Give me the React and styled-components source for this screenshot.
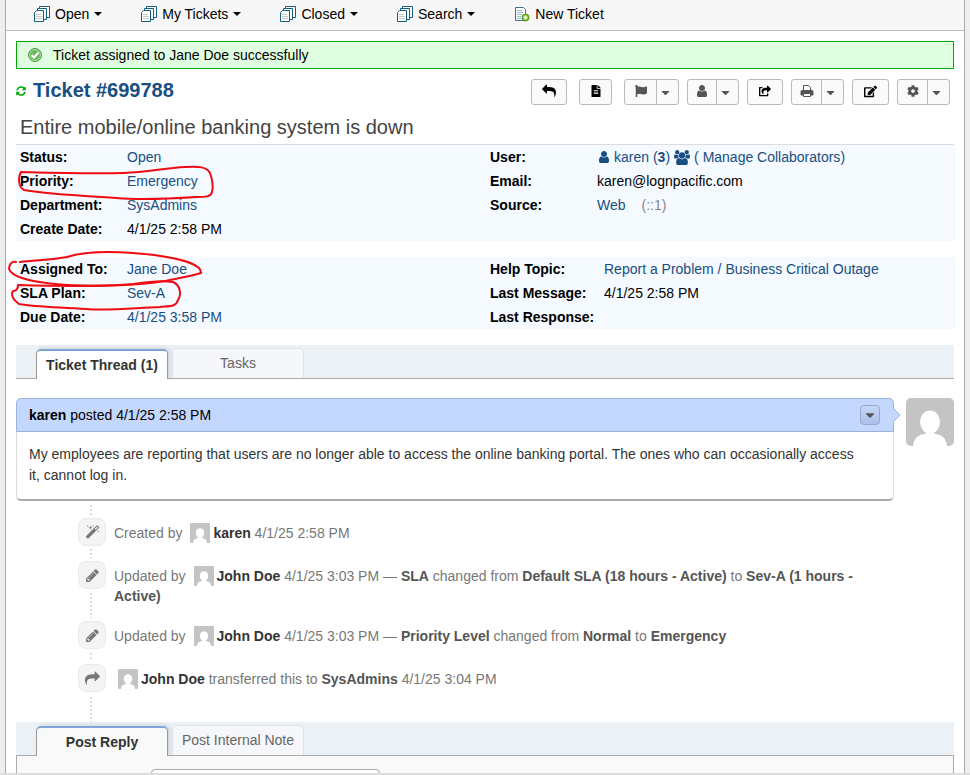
import React from "react";
import styled, { createGlobalStyle, css } from "styled-components";
import {
  FaFileAlt, FaFlag, FaShareSquare, FaEdit, FaCog, FaCaretDown, FaSyncAlt,
} from "react-icons/fa";

const GlobalStyle = createGlobalStyle`
  * { box-sizing: border-box; }
  body {
    margin: 0;
    background: #eee;
    color: #000;
    font: 14px/20px "Liberation Sans", Arial, sans-serif;
  }
  button, input, select { font: inherit; }
  a { color: #184e81; text-decoration: none; }
`;

const Page = styled.div`
  height: 100vh;
  padding: 0 5px;
  overflow: hidden;
  border-bottom: 2px solid #ddd;
`;

const Container = styled.main`
  display: flex;
  flex-direction: column;
  height: 100%;
  background: #fff;
  border: solid #aaa;
  border-width: 0 1px;
  overflow: hidden;
`;

const Nav = styled.nav`
  display: flex;
  flex: none;
  align-items: center;
  height: 31px;
  padding: 0 28px 2px;
  gap: 39px;
  background: #f7f7f7;
  border-bottom: 1px solid #bebebe;
`;

const NavLink = styled.a`
  display: flex;
  align-items: center;
  gap: 5px;
  color: #000;
`;

const Caret = styled.span`
  border: solid transparent;
  border-width: 4px 4px 0;
  border-top-color: currentColor;
`;

const Content = styled.div`
  display: flex;
  flex-direction: column;
  flex: none;
  padding: 10px 10px 0;
`;

const Notice = styled.div`
  display: flex;
  align-items: center;
  gap: 10px;
  height: 28px;
  padding: 0 10px;
  background: #e0ffe0;
  border: 1px solid #0a0;
`;

const TitleRow = styled.header`
  display: flex;
  justify-content: space-between;
  align-items: flex-start;
  padding: 10px 4px 0 0;
`;

const Title = styled.h1`
  display: flex;
  align-items: center;
  gap: 7px;
  margin: 0;
  font-size: 20px;
  line-height: 23px;
  color: #184e81;

  svg { color: #0a0; }
`;

const Actions = styled.div`
  display: flex;
  gap: 8px;
`;

const ActionGroup = styled.div`
  display: flex;
  height: 26px;
  background: #fafafa;
  border: 1px solid #bbb;
  border-radius: 3px;
  margin-right: ${(p) => (p.$spaced ? "4px" : "0")};
`;

const ActionButton = styled.button`
  display: flex;
  align-items: center;
  justify-content: center;
  width: ${(p) => p.$width || 34}px;
  padding: 0 0 2px;
  border: 0;
  background: none;
  color: ${(p) => (p.$muted ? "#555" : "#000")};

  & + & {
    padding: 0 4px 0 0;
    border-left: 1px solid #bbb;
  }
`;

const Subject = styled.h2`
  margin: 11px 0 0;
  padding: 0 4px 5px;
  font-size: 20px;
  font-weight: 400;
  line-height: 23px;
  color: #444;
  border-bottom: 1px solid #ddd;
`;

const Details = styled.div`
  position: relative;
  display: grid;
  gap: 16px;
  margin-right: -2px;
`;

const DetailSection = styled.section`
  display: grid;
  grid-template-columns: 1fr 1fr;
  align-items: start;
  background: #f4faff;
`;

const DetailTable = styled.table`
  border-collapse: collapse;

  th, td {
    height: 24px;
    padding: 0;
    text-align: left;
    line-height: 24px;
  }
  th {
    width: ${(p) => p.$label || 111}px;
    padding-left: 4px;
  }
`;

const UserLine = styled.span`
  display: flex;
  align-items: center;
  gap: 4px;
  color: #184e81;
`;

const Address = styled.span`
  margin-left: 16px;
  color: #888;
`;

const Markup = styled.svg`
  position: absolute;
  top: 0;
  left: -16px;
  pointer-events: none;
`;

const TabBar = styled.div`
  display: flex;
  align-items: flex-end;
  gap: 4px;
  height: 34px;
  margin-top: ${(p) => (p.$first ? "16px" : "0")};
  padding-left: 20px;
  background: #ecf1f5;
  border-bottom: 1px solid #aaa;
`;

const Tab = styled.button`
  width: 132px;
  height: 30px;
  padding: 0 0 2px;
  border: 1px solid #e0e2e8;
  border-bottom: 0;
  border-radius: 5px 5px 0 0;
  background: #f6f7fb;
  color: #666;

  ${(p) => p.$active && css`
    margin-bottom: -1px;
    padding-top: 2px;
    font-weight: 700;
    color: #333;
    background: ${p.$surface || "#fff"};
    border-color: #999;
    border-top: 2px solid #7fa5d8;
    box-shadow: 2px -1px 4px rgba(0, 0, 0, 0.12);
    clip-path: inset(-6px -6px 0 -6px);
  `}
`;

const Thread = styled.div`
  display: grid;
  grid-template-columns: 1fr 48px;
  gap: 12px;
  align-items: start;
  margin-top: 19px;
`;

const Entry = styled.article`
  border: 1px solid #ddd;
  border-bottom: 2px solid #aaa;
  border-radius: 5px;
`;

const EntryHeader = styled.header`
  position: relative;
  display: flex;
  align-items: center;
  justify-content: space-between;
  height: 34px;
  margin: -1px -1px 0;
  padding: 0 13px 0 12px;
  background: #c4d8ff;
  border: 1px solid #9eb3d8;
  border-radius: 5px 5px 0 0;
`;

const Pointer = styled.svg`
  position: absolute;
  top: 8px;
  right: -8px;
`;

const MenuButton = styled.button`
  display: flex;
  align-items: center;
  justify-content: center;
  width: 20px;
  height: 20px;
  padding: 0;
  border: 1px solid #98a9cc;
  border-radius: 4px;
  background: linear-gradient(#c6d6f6, #abc0e8);
  color: #555;
`;

const EntryBody = styled.p`
  margin: 0;
  padding: 12px 32px 13px 12px;
  line-height: 21px;
  color: #333;
`;

const Portrait = styled.svg`
  display: block;
  border-radius: ${(p) => (p.width > 30 ? 5 : 1)}px;
`;

const Events = styled.ol`
  display: grid;
  gap: 15px;
  margin: 0 0 0 62px;
  padding: 17px 0 30px;
  list-style: none;
  background: repeating-linear-gradient(#ddd 0 2px, transparent 2px 4px) 12px 4px / 2px 100% no-repeat;
`;

const Event = styled.li`
  display: grid;
  grid-template-columns: 28px 1fr;
  gap: 8px;
  padding-right: 76px;
  color: #777;

  strong { color: #555; }
`;

const EventIcon = styled.span`
  display: flex;
  align-items: center;
  justify-content: center;
  width: 28px;
  height: 28px;
  border: 1px solid #eaeaea;
  border-radius: 8px;
  background: #f4f4f4;
  box-shadow: 0 0 0 3px #fff;
`;

const EventText = styled.div`
  padding-top: 5px;
`;

const Person = styled.strong`
  && { color: #333; }

  svg {
    display: inline-block;
    margin: 0 3px -5px 4px;
    vertical-align: baseline;
    height: 20px;
  }
`;

const Composer = styled.form`
  min-height: 60px;
  padding: 13px 0 0 134px;
  background: #f9f9f9;
  border: solid #aaa;
  border-width: 0 1px;
`;

const Field = styled.select`
  width: 229px;
  height: 28px;
  border: 1px solid #aaa;
  border-radius: 4px;
  background: #fff;
`;

const glyphs = {
  share: "M1792 640q0 26-19 45l-512 512q-19 19-45 19t-45-19-19-45v-256h-224q-98 0-175.5 6t-154 21.5-133 42.5-105.5 69.5-80 101-48.5 138.5-17.5 181q0 55 5 123 0 6 2.5 23.5t2.5 26.5q0 15-8.5 25t-23.5 10q-16 0-28-17-7-9-13-22t-13.5-30-10.5-24q-127-285-127-451 0-199 53-333 162-403 875-403h224v-256q0-26 19-45t45-19 45 19l512 512q19 19 19 45z",
  pencil: "M491 1536l91-91-235-235-91 91v107h128v128h107zm523-928q0-22-22-22-10 0-17 7l-542 542q-7 7-7 17 0 22 22 22 10 0 17-7l542-542q7-7 7-17zm-54-192l416 416-832 832h-416v-416zm683 96q0 53-37 90l-166 166-416-416 166-165q36-38 90-38 53 0 91 38l235 234q37 39 37 91z",
  user: "M1536 1399q0 109-62.5 187t-150.5 78h-854q-88 0-150.5-78t-62.5-187q0-85 8.5-160.5t31.5-152 58.5-131 94-89 134.5-34.5q131 128 313 128t313-128q76 0 134.5 34.5t94 89 58.5 131 31.5 152 8.5 160.5zm-256-887q0 159-112.5 271.5t-271.5 112.5-271.5-112.5-112.5-271.5 112.5-271.5 271.5-112.5 271.5 112.5 112.5 271.5z",
  users: "M593 896q-162 5-265 128h-134q-82 0-138-40.5t-56-118.5q0-353 124-353 6 0 43.5 21t97.5 42.5 119 21.5q67 0 133-23-5 37-5 66 0 139 81 256zm1071 637q0 120-73 189.5t-194 69.5h-874q-121 0-194-69.5t-73-189.5q0-53 3.5-103.5t14-109 26.5-108.5 43-97.5 62-81 85.5-53.5 111.5-20q10 0 43 21.5t73 48 107 48 135 21.5 135-21.5 107-48 73-48 43-21.5q61 0 111.5 20t85.5 53.5 62 81 43 97.5 26.5 108.5 14 109 3.5 103.5zm-1024-1277q0 106-75 181t-181 75-181-75-75-181 75-181 181-75 181 75 75 181zm704 384q0 159-112.5 271.5t-271.5 112.5-271.5-112.5-112.5-271.5 112.5-271.5 271.5-112.5 271.5 112.5 112.5 271.5zm576 225q0 78-56 118.5t-138 40.5h-134q-103-123-265-128 81-117 81-256 0-29-5-66 66 23 133 23 59 0 119-21.5t97.5-42.5 43.5-21q124 0 124 353zm-128-609q0 106-75 181t-181 75-181-75-75-181 75-181 181-75 181 75 75 181z",
  wand: "M1254 581l293-293-107-107-293 293zm447-293q0 27-18 45l-1286 1286q-18 18-45 18t-45-18l-198-198q-18-18-18-45t18-45l1286-1286q18-18 45-18t45 18l198 198q18 18 18 45zm-1351-190l98 30-98 30-30 98-30-98-98-30 98-30 30-98zm350 162l196 60-196 60-60 196-60-196-196-60 196-60 60-196zm930 478l98 30-98 30-30 98-30-98-98-30 98-30 30-98zm-640-640l98 30-98 30-30 98-30-98-98-30 98-30 30-98z",
};

const Glyph = ({ name, size = 15, width = 1792, mirrored }) => (
  <svg
    width={Math.round((size * width) / 1792)}
    height={size}
    viewBox={`0 0 ${width} 1792`}
    fill="currentColor"
    aria-hidden="true"
  >
    <path d={glyphs[name]} transform={mirrored ? "matrix(-1 0 0 1 1792 0)" : undefined} />
  </svg>
);

const QueueIcon = () => (
  <svg width="16" height="16" viewBox="0 0 16 16" fill="#fff" stroke="#16607f" aria-hidden="true">
    <path d="M5.5 2.5V.5h10v11h-3" />
    <path d="M3.5 4V2.5h9v11h-3" />
    <path d="M.5 6.5l2-2h7v11h-9z" />
    <path d="M2 8.5h5M2 10.5h6M2 12.5h6" stroke="#c8c8c8" />
  </svg>
);

const NewIcon = () => (
  <svg width="16" height="16" viewBox="0 0 16 16" aria-hidden="true">
    <path d="M1.5 1.5h8l2 2v11h-10z" fill="#fff" stroke="#4c6b91" />
    <path d="M3 4.5h5M3 6.5h6M3 8.5h5M3 10.5h4M3 12.5h4" stroke="#8fb8dc" />
    <circle cx="11.5" cy="11.5" r="3.5" fill="#7bc322" stroke="#4b9415" />
    <path d="M11.5 9.5v4M9.5 11.5h4" stroke="#fff" strokeWidth="1.5" />
  </svg>
);

const SuccessIcon = () => (
  <svg width="16" height="16" viewBox="0 0 16 16" aria-hidden="true">
    <circle cx="8" cy="8" r="6.5" fill="#6bb85f" stroke="#4c9147" />
    <circle cx="8" cy="8" r="5.5" fill="none" stroke="#b5dfaa" />
    <path d="M4.5 8l2.5 2.5 4.5-5" fill="none" stroke="#fff" strokeWidth="2" />
  </svg>
);

const PrintIcon = () => (
  <svg width="14" height="14" viewBox="0 0 14 14" fill="none" stroke="currentColor" aria-hidden="true">
    <path d="M3.5 6.5v-5h5l2 2v3M3.5 9.5v3h7v-3z" />
    <path d="M1 11V7.5q0-1 1-1h10q1 0 1 1V11h-2.5V9.5h-7V11z" fill="currentColor" />
  </svg>
);

const Avatar = ({ size }) => (
  <Portrait width={size} height={size} viewBox="0 0 48 48" aria-hidden="true">
    <path d="M0 0h48v48H0z" fill="#c4c4c4" />
    <ellipse cx="24" cy="24" rx="10" ry="11.5" fill="#fff" />
    <path d="M7 48c1-8 5-11.5 12-12l2-3h6l2 3c7 .5 11 4 12 12z" fill="#fff" />
  </Portrait>
);

const navItems = ["Open", "My Tickets", "Closed", "Search"];

const actions = [
  { label: "Reply", icon: <Glyph name="share" size={14} mirrored />, spaced: true },
  { label: "Note", icon: <FaFileAlt size={12} />, width: 31, spaced: true },
  { label: "Flag", icon: <FaFlag size={12} />, width: 31, menu: 22 },
  { label: "Assign", icon: <Glyph name="user" size={14} />, width: 28, menu: 22 },
  { label: "Transfer", icon: <FaShareSquare size={12} /> },
  { label: "Print", icon: <PrintIcon />, width: 29, menu: 22 },
  { label: "Edit", icon: <FaEdit size={13} />, width: 35 },
  { label: "Settings", icon: <FaCog size={12} />, width: 29, menu: 22 },
];

const Rows = ({ label, rows }) => (
  <DetailTable $label={label}>
    <tbody>
      {rows.map(([name, value]) => (
        <tr key={name}><th scope="row">{name}:</th><td>{value}</td></tr>
      ))}
    </tbody>
  </DetailTable>
);

const link = (text) => <a href="#edit">{text}</a>;

const By = ({ name }) => <Person><Avatar size={20} />{name}</Person>;

const TicketEvent = ({ icon, children }) => (
  <Event><EventIcon>{icon}</EventIcon><EventText>{children}</EventText></Event>
);

export default function App() {
  return (
    <Page>
      <GlobalStyle />
      <Container>
        <Nav>
          {navItems.map((item) => (
            <NavLink href="#queue" key={item}><QueueIcon />{item}<Caret /></NavLink>
          ))}
          <NavLink href="#new"><NewIcon />New Ticket</NavLink>
        </Nav>
        <Content>
          <Notice role="status"><SuccessIcon />Ticket assigned to Jane Doe successfully</Notice>
          <TitleRow>
            <Title><FaSyncAlt size={10} />Ticket #699788</Title>
            <Actions>
              {actions.map((a) => (
                <ActionGroup key={a.label} $spaced={a.spaced}>
                  <ActionButton type="button" aria-label={a.label} $width={a.width} $muted={a.menu}>{a.icon}</ActionButton>
                  {a.menu && (
                    <ActionButton type="button" aria-label={`${a.label} options`} $width={a.menu} $muted>
                      <FaCaretDown size={13} />
                    </ActionButton>
                  )}
                </ActionGroup>
              ))}
            </Actions>
          </TitleRow>
          <Subject>Entire mobile/online banking system is down</Subject>
          <Details>
            <DetailSection>
              <Rows rows={[
                ["Status", link("Open")],
                ["Priority", link("Emergency")],
                ["Department", link("SysAdmins")],
                ["Create Date", "4/1/25 2:58 PM"],
              ]} />
              <Rows rows={[
                ["User", (
                  <UserLine>
                    <Glyph name="user" size={14} width={1664} />
                    <span>{link("karen")} (<b>3</b>)</span>
                    <Glyph name="users" size={15} width={1920} />
                    <span>( {link("Manage Collaborators")})</span>
                  </UserLine>
                )],
                ["Email", "karen@lognpacific.com"],
                ["Source", <>{link("Web")}<Address>(::1)</Address></>],
              ]} />
            </DetailSection>
            <DetailSection>
              <Rows rows={[
                ["Assigned To", link("Jane Doe")],
                ["SLA Plan", link("Sev-A")],
                ["Due Date", link("4/1/25 3:58 PM")],
              ]} />
              <Rows label={118} rows={[
                ["Help Topic", link("Report a Problem / Business Critical Outage")],
                ["Last Message", "4/1/25 2:58 PM"],
                ["Last Response", ""],
              ]} />
            </DetailSection>
            <Markup width="220" height="184" viewBox="0 145 220 184" fill="none" stroke="#f00a12" strokeWidth="2" strokeLinecap="round" strokeLinejoin="round" aria-hidden="true">
              <path d="M21 172C57 173 87 174 124 173C148 172 165 168 185 167C199 166 207 167 210 173C213 181 213 188 212 192C211 197 205 197 196 197C166 199 140 200 116 198C80 195 51 195 24 190C18 187 18 177 21 172" />
              <path d="M20 262C35 260 52 260 67 257C86 251 119 251 154 255C177 258 202 264 201 273C192 276 178 278 165 281C134 286 83 287 55 284C32 282 12 277 9 269C9 264 12 261 16 262" />
              <path d="M18 285C55 286 100 287 134 284C153 281 167 281 173 282C180 285 182 294 178 300C176 307 170 306 160 307C134 308 107 311 86 309C56 307 36 307 19 304C12 299 11 294 13 291C17 291 18 288 18 285" />
            </Markup>
          </Details>
          <TabBar role="tablist" $first>
            <Tab type="button" role="tab" aria-selected="true" $active>Ticket Thread (1)</Tab>
            <Tab type="button" role="tab" aria-selected="false">Tasks</Tab>
          </TabBar>
          <Thread>
            <Entry>
              <EntryHeader>
                <span><b>karen</b> posted 4/1/25 2:58 PM</span>
                <MenuButton type="button" aria-label="Message options"><FaCaretDown size={14} /></MenuButton>
                <Pointer width="8" height="16" viewBox="0 0 8 16" aria-hidden="true">
                  <path d="M0 1l7 7-7 7" fill="#c4d8ff" stroke="#9eb3d8" />
                </Pointer>
              </EntryHeader>
              <EntryBody>
                My employees are reporting that users are no longer able to access the online banking portal. The ones who can occasionally access it, cannot log in.
              </EntryBody>
            </Entry>
            <Avatar size={48} />
          </Thread>
          <Events>
            <TicketEvent icon={<Glyph name="wand" />}>
              Created by <By name="karen" /> 4/1/25 2:58 PM
            </TicketEvent>
            <TicketEvent icon={<Glyph name="pencil" />}>
              Updated by <By name="John Doe" /> 4/1/25 3:03 PM — <strong>SLA</strong> changed from <strong>Default SLA (18 hours - Active)</strong> to <strong>Sev-A (1 hours - Active)</strong>
            </TicketEvent>
            <TicketEvent icon={<Glyph name="pencil" />}>
              Updated by <By name="John Doe" /> 4/1/25 3:03 PM — <strong>Priority Level</strong> changed from <strong>Normal</strong> to <strong>Emergency</strong>
            </TicketEvent>
            <TicketEvent icon={<Glyph name="share" />}>
              <By name="John Doe" /> transferred this to <strong>SysAdmins</strong> 4/1/25 3:04 PM
            </TicketEvent>
          </Events>
          <TabBar role="tablist">
            <Tab type="button" role="tab" aria-selected="true" $active $surface="#f9f9f9">Post Reply</Tab>
            <Tab type="button" role="tab" aria-selected="false">Post Internal Note</Tab>
          </TabBar>
          <Composer>
            <Field aria-label="From" />
          </Composer>
        </Content>
      </Container>
    </Page>
  );
}
